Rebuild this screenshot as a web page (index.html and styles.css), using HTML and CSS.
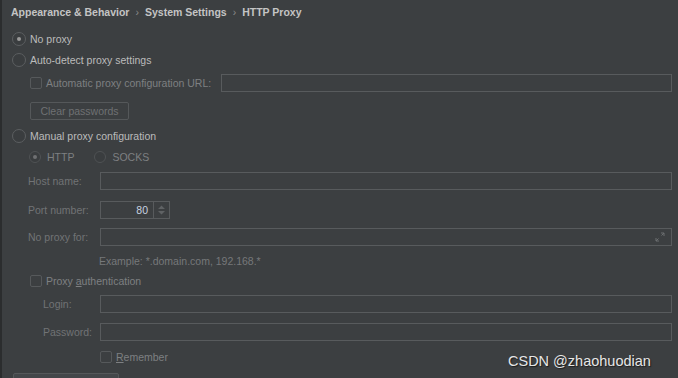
FILE: index.html
```html
<!DOCTYPE html>
<html>
<head>
    <meta charset="utf-8">
    <title>HTTP Proxy</title>
    <link rel="stylesheet" href="styles.css">
</head>
<body>
    <div class="panel">
        <div class="crumbs">
            <span>Appearance &amp; Behavior</span>
            <span class="sep">›</span>
            <span>System Settings</span>
            <span class="sep">›</span>
            <span>HTTP Proxy</span>
        </div>

        <div class="opt first"><span class="radio on"></span>No proxy</div>
        <div class="opt"><span class="radio"></span>Auto-detect proxy settings</div>

        <div class="line url indent">
            <span class="check"></span>
            <span class="dim">Automatic proxy configuration URL:</span>
            <div class="field grow"></div>
        </div>
        <div class="line indent btnrow">
            <div class="btn">Clear passwords</div>
        </div>

        <div class="opt manual"><span class="radio"></span>Manual proxy configuration</div>
        <div class="opt types">
            <span class="radio small on"></span><span class="dim">HTTP</span>
            <span class="radio small socks"></span><span class="dim">SOCKS</span>
        </div>

        <div class="form host">
            <label>Host name:</label>
            <div class="field grow"></div>
        </div>
        <div class="form port">
            <label>Port number:</label>
            <div class="field spin">
                <span class="num">80</span>
                <span class="arrows">
                    <svg width="9" height="12" viewBox="0 0 9 12"><path d="M1 5 L4.5 1.5 L8 5 Z M1 7 L4.5 10.5 L8 7 Z" fill="#5f6264"/></svg>
                </span>
            </div>
        </div>
        <div class="form noproxy">
            <label>No proxy for:</label>
            <div class="field grow expand">
                <svg width="10" height="10" viewBox="0 0 10 10"><path d="M6 1 H9 V4 M9 1 L6.5 3.5 M4 9 H1 V6 M1 9 L3.5 6.5" stroke="#6b6e70" stroke-width="1" fill="none"/></svg>
            </div>
        </div>
        <div class="example">Example: *.domain.com, 192.168.*</div>

        <div class="opt indent auth"><span class="check"></span><span class="dim">Proxy <u>a</u>uthentication</span></div>
        <div class="form sub login">
            <label>Login:</label>
            <div class="field grow"></div>
        </div>
        <div class="form sub pass">
            <label>Password:</label>
            <div class="field grow"></div>
        </div>
        <div class="opt remember"><span class="check"></span><span class="dim"><u>R</u>emember</span></div>

        <div class="btn bottom"></div>
    </div>
    <div class="mark">CSDN @zhaohuodian</div>
</body>
</html>
```

FILE: styles.css
```css
html, body{
    margin: 0;
    height: 100%;
    overflow: hidden;
}
body{
    background: #3c3f41;
    border-left: 2px solid #2b2d2e;
    box-sizing: border-box;
    font-family: "Liberation Sans", Arial, sans-serif;
    font-size: 10.5px;
    color: #bbbbbb;
    position: relative;
}
.panel{
    padding: 0 6px 0 10px;
}
.crumbs{
    height: 24px;
    display: flex;
    align-items: center;
    font-weight: bold;
    color: #c4c4c4;
    gap: 6px;
    margin-left: -1px;
}
.crumbs .sep{
    font-weight: normal;
    color: #8a8a8a;
}
.opt, .line, .form{
    display: flex;
    align-items: center;
}
.opt{
    height: 21px;
}
.first{ margin-top: 4px; }
.indent{ padding-left: 18px; }
.radio{
    width: 12px;
    height: 12px;
    border: 1px solid #5c5f61;
    border-radius: 50%;
    background: #3a3d3f;
    margin-right: 4px;
    position: relative;
}
.radio.on::after{
    content: "";
    position: absolute;
    left: 4px;
    top: 4px;
    width: 4px;
    height: 4px;
    border-radius: 50%;
    background: #9a9a9a;
}
.types{
    padding-left: 17px;
}
.radio.small{
    width: 10px;
    height: 10px;
    border-color: #4f5254;
    margin-right: 6px;
}
.radio.small.on::after{
    left: 3px;
    top: 3px;
    background: #6e7072;
}
.radio.socks{
    margin-left: 20px;
}
.check{
    width: 10px;
    height: 10px;
    border: 1px solid #56595b;
    border-radius: 2px;
    margin-right: 4px;
}
.dim{
    color: #7e8082;
}
.url{
    height: 18px;
    margin-top: 4px;
}
.url .dim{
    margin-right: 10px;
}
.field{
    height: 16px;
    border: 1px solid #585b5d;
    background: #3c3f41;
}
.grow{
    flex: 1;
}
.btnrow{
    margin-top: 10px;
}
.btn{
    width: 89px;
    height: 16px;
    border: 1px solid #55585a;
    border-radius: 2px;
    padding: 0 4px;
    line-height: 16px;
    text-align: center;
    color: #6f7173;
}
.manual{ margin-top: 5px; }
.form{
    padding-left: 16px;
}
.form label{
    width: 72px;
    color: #717375;
}
.form.sub{
    padding-left: 31px;
}
.form.sub label{
    width: 57px;
}
.host{ margin-top: 5px; }
.port{ margin-top: 11px; }
.noproxy{ margin-top: 9px; }
.spin{
    width: 68px;
    display: flex;
    align-items: center;
}
.num{
    flex: 1;
    text-align: right;
    padding-right: 5px;
    color: #c8d3e0;
}
.arrows{
    width: 15px;
    height: 16px;
    border-left: 1px solid #585b5d;
    display: flex;
    align-items: center;
    justify-content: center;
}
.expand{
    display: flex;
    align-items: center;
    justify-content: flex-end;
    padding-right: 6px;
}
.example{
    height: 18px;
    line-height: 18px;
    margin-top: 6px;
    padding-left: 87px;
    color: #76787a;
}
.auth{ margin-top: 1px; height: 20px; }
.login{ margin-top: 4px; }
.pass{ margin-top: 10px; }
.remember{
    margin-top: 6px;
    height: 20px;
    padding-left: 88px;
}
.bottom{
    margin-top: 6px;
    margin-left: 1px;
    width: 96px;
    height: 20px;
    background: #44474a;
}
.mark{
    position: absolute;
    left: 506px;
    bottom: 9px;
    font-family: "Liberation Sans", Arial, sans-serif;
    font-size: 14.5px;
    color: #e6e6e6;
    text-shadow: 1px 1px 1px #1c1c1c;
}
```
